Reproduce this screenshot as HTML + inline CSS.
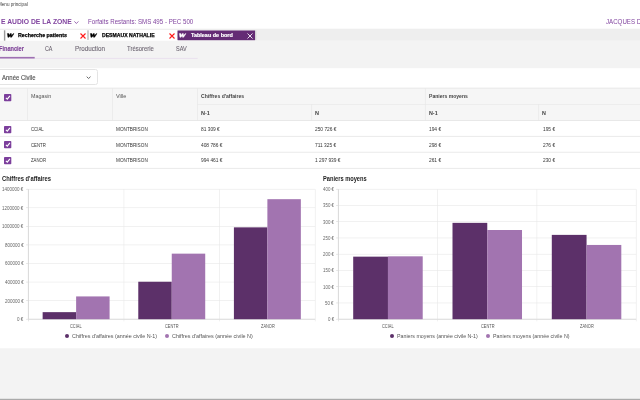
<!DOCTYPE html>
<html><head><meta charset="utf-8">
<style>
*{margin:0;padding:0;box-sizing:border-box}
html,body{width:640px;height:400px;overflow:hidden;background:#fff;font-family:"Liberation Sans",sans-serif}
.a{position:absolute;white-space:nowrap;line-height:1;transform-origin:0 0}
.bg{position:absolute}
svg{position:absolute;overflow:visible}
</style></head><body style="filter:blur(0.2px)">
<svg style="left:0;top:0" width="640" height="400" viewBox="0 0 640 400"><rect x="0.00" y="28.70" width="640.00" height="12.10" fill="#eeeeee"/>
<rect x="0.00" y="29.90" width="177.50" height="11.00" fill="#ffffff"/>
<rect x="3.90" y="30.30" width="1.40" height="10.50" fill="#9a9a9a"/>
<rect x="87.20" y="30.30" width="1.60" height="9.60" fill="#c4c4c4"/>
<rect x="177.50" y="30.40" width="77.70" height="9.80" rx="0.4" fill="#642c75"/>
<rect x="255.20" y="30.60" width="1.20" height="9.60" fill="#d6d6d6"/>
<rect x="0.00" y="40.80" width="640.00" height="27.40" fill="#f3f3f3"/>
<rect x="0.00" y="57.90" width="197.70" height="0.90" fill="#e9dfee"/>
<rect x="0.00" y="56.90" width="34.70" height="1.60" fill="#9e70b2"/>
<rect x="0.00" y="88.00" width="640.00" height="32.60" fill="#f6f6f6"/>
<rect x="0.00" y="87.70" width="640.00" height="0.80" fill="#e4e4e4"/>
<rect x="197.50" y="104.00" width="442.50" height="0.60" fill="#e8e8e8"/>
<rect x="27.00" y="88.30" width="0.60" height="32.30" fill="#e6e6e6"/>
<rect x="112.00" y="88.30" width="0.60" height="32.30" fill="#e6e6e6"/>
<rect x="197.20" y="88.30" width="0.60" height="32.30" fill="#e6e6e6"/>
<rect x="424.95" y="88.30" width="0.60" height="32.30" fill="#e6e6e6"/>
<rect x="311.45" y="104.30" width="0.60" height="16.30" fill="#e6e6e6"/>
<rect x="538.45" y="104.30" width="0.60" height="16.30" fill="#e6e6e6"/>
<rect x="0.00" y="120.20" width="640.00" height="0.80" fill="#e4e4e4"/>
<rect x="0.00" y="135.90" width="640.00" height="0.80" fill="#e4e4e4"/>
<rect x="0.00" y="151.80" width="640.00" height="0.80" fill="#e4e4e4"/>
<rect x="0.00" y="167.90" width="640.00" height="0.80" fill="#e4e4e4"/>
<rect x="28.30" y="318.90" width="286.90" height="0.60" fill="#e8e8e8"/>
<rect x="26.10" y="318.90" width="2.20" height="0.60" fill="#d8d8d8"/>
<rect x="28.30" y="300.33" width="286.90" height="0.60" fill="#e8e8e8"/>
<rect x="26.10" y="300.33" width="2.20" height="0.60" fill="#d8d8d8"/>
<rect x="28.30" y="281.76" width="286.90" height="0.60" fill="#e8e8e8"/>
<rect x="26.10" y="281.76" width="2.20" height="0.60" fill="#d8d8d8"/>
<rect x="28.30" y="263.19" width="286.90" height="0.60" fill="#e8e8e8"/>
<rect x="26.10" y="263.19" width="2.20" height="0.60" fill="#d8d8d8"/>
<rect x="28.30" y="244.61" width="286.90" height="0.60" fill="#e8e8e8"/>
<rect x="26.10" y="244.61" width="2.20" height="0.60" fill="#d8d8d8"/>
<rect x="28.30" y="226.04" width="286.90" height="0.60" fill="#e8e8e8"/>
<rect x="26.10" y="226.04" width="2.20" height="0.60" fill="#d8d8d8"/>
<rect x="28.30" y="207.47" width="286.90" height="0.60" fill="#e8e8e8"/>
<rect x="26.10" y="207.47" width="2.20" height="0.60" fill="#d8d8d8"/>
<rect x="28.30" y="188.90" width="286.90" height="0.60" fill="#e8e8e8"/>
<rect x="26.10" y="188.90" width="2.20" height="0.60" fill="#d8d8d8"/>
<rect x="28.00" y="189.20" width="0.60" height="132.20" fill="#d8d8d8"/>
<rect x="123.63" y="189.20" width="0.60" height="132.20" fill="#e8e8e8"/>
<rect x="219.27" y="189.20" width="0.60" height="132.20" fill="#e8e8e8"/>
<rect x="314.90" y="189.20" width="0.60" height="132.20" fill="#e8e8e8"/>
<rect x="27.90" y="189.20" width="0.80" height="130.00" fill="#d8d8d8"/>
<rect x="28.30" y="318.80" width="286.90" height="0.80" fill="#d8d8d8"/>
<rect x="42.64" y="312.15" width="33.47" height="7.05" fill="#5c3069"/>
<rect x="76.12" y="296.42" width="33.47" height="22.78" fill="#a274b0"/>
<rect x="138.28" y="281.74" width="33.47" height="37.46" fill="#5c3069"/>
<rect x="171.75" y="253.65" width="33.47" height="65.55" fill="#a274b0"/>
<rect x="233.91" y="227.36" width="33.47" height="91.84" fill="#5c3069"/>
<rect x="267.38" y="199.18" width="33.47" height="120.02" fill="#a274b0"/>
<rect x="338.30" y="318.90" width="297.90" height="0.60" fill="#e8e8e8"/>
<rect x="336.10" y="318.90" width="2.20" height="0.60" fill="#d8d8d8"/>
<rect x="338.30" y="302.65" width="297.90" height="0.60" fill="#e8e8e8"/>
<rect x="336.10" y="302.65" width="2.20" height="0.60" fill="#d8d8d8"/>
<rect x="338.30" y="286.40" width="297.90" height="0.60" fill="#e8e8e8"/>
<rect x="336.10" y="286.40" width="2.20" height="0.60" fill="#d8d8d8"/>
<rect x="338.30" y="270.15" width="297.90" height="0.60" fill="#e8e8e8"/>
<rect x="336.10" y="270.15" width="2.20" height="0.60" fill="#d8d8d8"/>
<rect x="338.30" y="253.90" width="297.90" height="0.60" fill="#e8e8e8"/>
<rect x="336.10" y="253.90" width="2.20" height="0.60" fill="#d8d8d8"/>
<rect x="338.30" y="237.65" width="297.90" height="0.60" fill="#e8e8e8"/>
<rect x="336.10" y="237.65" width="2.20" height="0.60" fill="#d8d8d8"/>
<rect x="338.30" y="221.40" width="297.90" height="0.60" fill="#e8e8e8"/>
<rect x="336.10" y="221.40" width="2.20" height="0.60" fill="#d8d8d8"/>
<rect x="338.30" y="205.15" width="297.90" height="0.60" fill="#e8e8e8"/>
<rect x="336.10" y="205.15" width="2.20" height="0.60" fill="#d8d8d8"/>
<rect x="338.30" y="188.90" width="297.90" height="0.60" fill="#e8e8e8"/>
<rect x="336.10" y="188.90" width="2.20" height="0.60" fill="#d8d8d8"/>
<rect x="338.00" y="189.20" width="0.60" height="132.20" fill="#d8d8d8"/>
<rect x="437.30" y="189.20" width="0.60" height="132.20" fill="#e8e8e8"/>
<rect x="536.60" y="189.20" width="0.60" height="132.20" fill="#e8e8e8"/>
<rect x="635.90" y="189.20" width="0.60" height="132.20" fill="#e8e8e8"/>
<rect x="337.90" y="189.20" width="0.80" height="130.00" fill="#d8d8d8"/>
<rect x="338.30" y="318.80" width="297.90" height="0.80" fill="#d8d8d8"/>
<rect x="353.20" y="256.65" width="34.76" height="62.55" fill="#5c3069"/>
<rect x="387.95" y="256.32" width="34.76" height="62.88" fill="#a274b0"/>
<rect x="452.50" y="222.85" width="34.76" height="96.35" fill="#5c3069"/>
<rect x="487.25" y="230.00" width="34.76" height="89.20" fill="#a274b0"/>
<rect x="551.80" y="234.88" width="34.76" height="84.33" fill="#5c3069"/>
<rect x="586.55" y="244.95" width="34.76" height="74.25" fill="#a274b0"/>
<rect x="0.00" y="348.30" width="640.00" height="49.90" fill="#f3f3f3"/>
<rect x="0.00" y="398.20" width="640.00" height="0.90" fill="#dddddd"/>
<rect x="0.00" y="399.00" width="640.00" height="1.00" fill="#aaaaaa"/></svg>
<div class="bg" style="left:-5.00px;top:69.10px;width:103.30px;height:15.80px;background:#fff;border:0.8px solid #e4e4e4;border-radius:2.5px"></div>
<svg style="left:86.2px;top:75.6px" width="6" height="4" viewBox="0 0 6 4"><path d="M0.7 0.7 L2.6 2.5 L4.5 0.7" fill="none" stroke="#666" stroke-width="1"/></svg>
<svg style="left:74.4px;top:21px" width="5" height="3" viewBox="0 0 5 3"><path d="M0.4 0.4 L2.4 2.5 L4.4 0.4" fill="none" stroke="#8246a0" stroke-width="0.8"/></svg>
<svg style="left:7.00px;top:32.60px" width="8" height="6" viewBox="0 0 8 6"><path d="M0.3 0.5 L1.9 0.5 L2.1 2.6 L3.2 0.6 L4.4 0.6 L4.5 2.6 L6.3 0.5 L7.0 0.7 L4.6 4.3 L3.5 4.3 L3.2 2.8 L2.0 4.3 L0.9 4.3 Z" fill="#000" stroke="#000" stroke-width="0.35" stroke-linejoin="round"/></svg>
<svg style="left:90.40px;top:32.60px" width="8" height="6" viewBox="0 0 8 6"><path d="M0.3 0.5 L1.9 0.5 L2.1 2.6 L3.2 0.6 L4.4 0.6 L4.5 2.6 L6.3 0.5 L7.0 0.7 L4.6 4.3 L3.5 4.3 L3.2 2.8 L2.0 4.3 L0.9 4.3 Z" fill="#000" stroke="#000" stroke-width="0.35" stroke-linejoin="round"/></svg>
<svg style="left:179.20px;top:32.60px" width="8" height="6" viewBox="0 0 8 6"><path d="M0.3 0.5 L1.9 0.5 L2.1 2.6 L3.2 0.6 L4.4 0.6 L4.5 2.6 L6.3 0.5 L7.0 0.7 L4.6 4.3 L3.5 4.3 L3.2 2.8 L2.0 4.3 L0.9 4.3 Z" fill="#fff" stroke="#fff" stroke-width="0.35" stroke-linejoin="round"/></svg>
<svg style="left:80.00px;top:32.90px" width="6" height="6" viewBox="0 0 6 6"><path d="M0.5 0.5 L5.5 5.5 M5.5 0.5 L0.5 5.5" fill="none" stroke="#ff1a1a" stroke-width="1.10"/></svg>
<svg style="left:169.00px;top:32.90px" width="6" height="6" viewBox="0 0 6 6"><path d="M0.5 0.5 L5.5 5.5 M5.5 0.5 L0.5 5.5" fill="none" stroke="#ff1a1a" stroke-width="1.10"/></svg>
<svg style="left:246.80px;top:33.30px" width="6" height="6" viewBox="0 0 6 6"><path d="M0.5 0.5 L5.5 5.5 M5.5 0.5 L0.5 5.5" fill="none" stroke="#ffffff" stroke-width="0.85"/></svg>
<svg style="left:3.90px;top:93.70px" width="7.3" height="7.3" viewBox="0 0 7.3 7.3"><rect x="0" y="0" width="7.3" height="7.3" rx="0.8" fill="#7c3f9c"/><path d="M1.9 3.9 L3.3 5.1 L5.9 1.9" fill="none" stroke="#fff" stroke-width="1.1"/></svg>
<svg style="left:3.90px;top:125.60px" width="7.3" height="7.3" viewBox="0 0 7.3 7.3"><rect x="0" y="0" width="7.3" height="7.3" rx="0.8" fill="#7c3f9c"/><path d="M1.9 3.9 L3.3 5.1 L5.9 1.9" fill="none" stroke="#fff" stroke-width="1.1"/></svg>
<svg style="left:3.90px;top:141.45px" width="7.3" height="7.3" viewBox="0 0 7.3 7.3"><rect x="0" y="0" width="7.3" height="7.3" rx="0.8" fill="#7c3f9c"/><path d="M1.9 3.9 L3.3 5.1 L5.9 1.9" fill="none" stroke="#fff" stroke-width="1.1"/></svg>
<svg style="left:3.90px;top:157.30px" width="7.3" height="7.3" viewBox="0 0 7.3 7.3"><rect x="0" y="0" width="7.3" height="7.3" rx="0.8" fill="#7c3f9c"/><path d="M1.9 3.9 L3.3 5.1 L5.9 1.9" fill="none" stroke="#fff" stroke-width="1.1"/></svg>
<div class="bg" style="left:64.60px;top:334.00px;width:4px;height:4px;border-radius:50%;background:#5c3069"></div>
<div class="bg" style="left:164.70px;top:334.00px;width:4px;height:4px;border-radius:50%;background:#a274b0"></div>
<div class="bg" style="left:389.70px;top:334.00px;width:4px;height:4px;border-radius:50%;background:#5c3069"></div>
<div class="bg" style="left:485.70px;top:334.00px;width:4px;height:4px;border-radius:50%;background:#a274b0"></div>
<div class="a" style="left:-1.61px;top:2.00px;font-size:5.09px;color:#444;transform:scaleX(0.9000);">Menu principal</div>
<div class="a" style="left:0.80px;top:18.00px;font-size:7.99px;font-weight:bold;color:#8246a0;transform:scaleX(0.8496);">E AUDIO DE LA ZONE</div>
<div class="a" style="left:88.30px;top:18.00px;font-size:6.98px;color:#8246a0;transform:scaleX(0.8826);">Forfaits Restants: SMS 495 - PEC 500</div>
<div class="a" style="left:606.40px;top:18.00px;font-size:6.98px;color:#8246a0;transform:scaleX(0.8826);">JACQUES DUPONT</div>
<div class="a" style="left:18.30px;top:33.00px;font-size:5.67px;font-weight:bold;color:#000;transform:scaleX(0.9359);-webkit-text-stroke:0.25px #000;">Recherche patients</div>
<div class="a" style="left:102.20px;top:33.00px;font-size:5.67px;font-weight:bold;color:#000;transform:scaleX(0.9063);-webkit-text-stroke:0.25px #000;">DESMAUX NATHALIE</div>
<div class="a" style="left:191.00px;top:33.00px;font-size:5.67px;font-weight:bold;color:#fff;transform:scaleX(0.9656);-webkit-text-stroke:0.2px #fff;">Tableau de bord</div>
<div class="a" style="left:-0.90px;top:45.00px;font-size:6.98px;font-weight:bold;color:#7e4298;transform:scaleX(0.8027);-webkit-text-stroke:0.15px #7e4298;">Financier</div>
<div class="a" style="left:45.30px;top:45.00px;font-size:6.98px;color:#6d6672;transform:scaleX(0.7675);-webkit-text-stroke:0.1px #6d6672;">CA</div>
<div class="a" style="left:74.70px;top:45.00px;font-size:6.98px;color:#6d6672;transform:scaleX(0.8971);-webkit-text-stroke:0.1px #6d6672;">Production</div>
<div class="a" style="left:126.90px;top:45.00px;font-size:6.98px;color:#6d6672;transform:scaleX(0.8539);-webkit-text-stroke:0.1px #6d6672;">Trésorerie</div>
<div class="a" style="left:175.80px;top:45.00px;font-size:6.98px;color:#6d6672;transform:scaleX(0.7911);-webkit-text-stroke:0.1px #6d6672;">SAV</div>
<div class="a" style="left:1.90px;top:75.00px;font-size:6.54px;color:#4a4a4a;transform:scaleX(0.9153);-webkit-text-stroke:0.1px #4a4a4a;">Année Civile</div>
<div class="a" style="left:30.80px;top:94.00px;font-size:5.52px;color:#555;transform:scaleX(0.9745);">Magasin</div>
<div class="a" style="left:115.80px;top:94.00px;font-size:5.52px;color:#555;transform:scaleX(1.0044);">Ville</div>
<div class="a" style="left:201.00px;top:94.00px;font-size:5.52px;font-weight:bold;color:#444;transform:scaleX(0.9226);">Chiffres d'affaires</div>
<div class="a" style="left:428.50px;top:94.00px;font-size:5.52px;font-weight:bold;color:#444;transform:scaleX(0.9174);">Paniers moyens</div>
<div class="a" style="left:201.00px;top:111.00px;font-size:5.67px;font-weight:bold;color:#444;transform:scaleX(0.9757);">N-1</div>
<div class="a" style="left:315.00px;top:111.00px;font-size:5.67px;font-weight:bold;color:#444;transform:scaleX(0.9757);">N</div>
<div class="a" style="left:428.50px;top:111.00px;font-size:5.67px;font-weight:bold;color:#444;transform:scaleX(0.9478);">N-1</div>
<div class="a" style="left:542.00px;top:111.00px;font-size:5.67px;font-weight:bold;color:#444;transform:scaleX(0.9478);">N</div>
<div class="a" style="left:30.80px;top:127.00px;font-size:5.52px;color:#333;transform:scaleX(0.7788);">CCIAL</div>
<div class="a" style="left:116.00px;top:127.00px;font-size:5.52px;color:#333;transform:scaleX(0.8502);">MONTBRISON</div>
<div class="a" style="left:201.25px;top:127.00px;font-size:5.52px;color:#333;transform:scaleX(0.8761);">81 309 €</div>
<div class="a" style="left:315.00px;top:127.00px;font-size:5.52px;color:#333;transform:scaleX(0.8761);">250 726 €</div>
<div class="a" style="left:428.75px;top:127.00px;font-size:5.52px;color:#333;transform:scaleX(0.8761);">194 €</div>
<div class="a" style="left:543.00px;top:127.00px;font-size:5.52px;color:#333;transform:scaleX(0.8761);">195 €</div>
<div class="a" style="left:30.70px;top:143.00px;font-size:5.52px;color:#333;transform:scaleX(0.7788);">CENTR</div>
<div class="a" style="left:116.00px;top:143.00px;font-size:5.52px;color:#333;transform:scaleX(0.8502);">MONTBRISON</div>
<div class="a" style="left:201.25px;top:143.00px;font-size:5.52px;color:#333;transform:scaleX(0.8761);">408 786 €</div>
<div class="a" style="left:315.00px;top:143.00px;font-size:5.52px;color:#333;transform:scaleX(0.8761);">711 325 €</div>
<div class="a" style="left:428.75px;top:143.00px;font-size:5.52px;color:#333;transform:scaleX(0.8761);">298 €</div>
<div class="a" style="left:543.00px;top:143.00px;font-size:5.52px;color:#333;transform:scaleX(0.8761);">276 €</div>
<div class="a" style="left:30.70px;top:158.00px;font-size:5.52px;color:#333;transform:scaleX(0.7788);">ZANOR</div>
<div class="a" style="left:116.00px;top:158.00px;font-size:5.52px;color:#333;transform:scaleX(0.8502);">MONTBRISON</div>
<div class="a" style="left:201.25px;top:158.00px;font-size:5.52px;color:#333;transform:scaleX(0.8761);">994 461 €</div>
<div class="a" style="left:315.00px;top:158.00px;font-size:5.52px;color:#333;transform:scaleX(0.8761);">1 297 939 €</div>
<div class="a" style="left:428.75px;top:158.00px;font-size:5.52px;color:#333;transform:scaleX(0.8761);">261 €</div>
<div class="a" style="left:543.00px;top:158.00px;font-size:5.52px;color:#333;transform:scaleX(0.8761);">230 €</div>
<div class="a" style="left:1.80px;top:176.00px;font-size:6.83px;font-weight:bold;color:#222;transform:scaleX(0.8485);">Chiffres d'affaires</div>
<div class="a" style="left:323.00px;top:176.00px;font-size:6.83px;font-weight:bold;color:#222;transform:scaleX(0.8331);">Paniers moyens</div>
<div class="a" style="left:17.13px;top:317.00px;font-size:5.81px;color:#666;transform:scaleX(0.7772);">0 €</div>
<div class="a" style="left:4.61px;top:299.00px;font-size:5.81px;color:#666;transform:scaleX(0.7772);">200000 €</div>
<div class="a" style="left:4.61px;top:280.00px;font-size:5.81px;color:#666;transform:scaleX(0.7772);">400000 €</div>
<div class="a" style="left:4.61px;top:261.00px;font-size:5.81px;color:#666;transform:scaleX(0.7772);">600000 €</div>
<div class="a" style="left:4.61px;top:243.00px;font-size:5.81px;color:#666;transform:scaleX(0.7772);">800000 €</div>
<div class="a" style="left:2.10px;top:224.00px;font-size:5.81px;color:#666;transform:scaleX(0.7772);">1000000 €</div>
<div class="a" style="left:2.10px;top:206.00px;font-size:5.81px;color:#666;transform:scaleX(0.7772);">1200000 €</div>
<div class="a" style="left:2.10px;top:187.00px;font-size:5.81px;color:#666;transform:scaleX(0.7772);">1400000 €</div>
<div class="a" style="left:327.89px;top:317.00px;font-size:5.81px;color:#666;transform:scaleX(0.7590);">0 €</div>
<div class="a" style="left:325.45px;top:301.00px;font-size:5.81px;color:#666;transform:scaleX(0.7590);">50 €</div>
<div class="a" style="left:323.00px;top:285.00px;font-size:5.81px;color:#666;transform:scaleX(0.7590);">100 €</div>
<div class="a" style="left:323.00px;top:268.00px;font-size:5.81px;color:#666;transform:scaleX(0.7590);">150 €</div>
<div class="a" style="left:323.00px;top:252.00px;font-size:5.81px;color:#666;transform:scaleX(0.7590);">200 €</div>
<div class="a" style="left:323.00px;top:236.00px;font-size:5.81px;color:#666;transform:scaleX(0.7590);">250 €</div>
<div class="a" style="left:323.00px;top:220.00px;font-size:5.81px;color:#666;transform:scaleX(0.7590);">300 €</div>
<div class="a" style="left:323.00px;top:203.00px;font-size:5.81px;color:#666;transform:scaleX(0.7590);">350 €</div>
<div class="a" style="left:323.00px;top:187.00px;font-size:5.81px;color:#666;transform:scaleX(0.7590);">400 €</div>
<div class="a" style="left:69.60px;top:324.00px;font-size:5.81px;color:#555;transform:scaleX(0.6779);">CCIAL</div>
<div class="a" style="left:381.90px;top:324.00px;font-size:5.81px;color:#555;transform:scaleX(0.6779);">CCIAL</div>
<div class="a" style="left:165.05px;top:324.00px;font-size:5.81px;color:#555;transform:scaleX(0.6779);">CENTR</div>
<div class="a" style="left:480.55px;top:324.00px;font-size:5.81px;color:#555;transform:scaleX(0.6779);">CENTR</div>
<div class="a" style="left:260.57px;top:324.00px;font-size:5.81px;color:#555;transform:scaleX(0.6779);">ZANOR</div>
<div class="a" style="left:579.74px;top:324.00px;font-size:5.81px;color:#555;transform:scaleX(0.6779);">ZANOR</div>
<div class="a" style="left:71.80px;top:333.00px;font-size:6.10px;color:#555;transform:scaleX(0.8826);">Chiffres d'affaires (année civile N-1)</div>
<div class="a" style="left:171.90px;top:333.00px;font-size:6.10px;color:#555;transform:scaleX(0.8879);">Chiffres d'affaires (année civile N)</div>
<div class="a" style="left:396.90px;top:333.00px;font-size:6.10px;color:#555;transform:scaleX(0.8678);">Paniers moyens (année civile N-1)</div>
<div class="a" style="left:493.00px;top:333.00px;font-size:6.10px;color:#555;transform:scaleX(0.8724);">Paniers moyens (année civile N)</div>
</body></html>
